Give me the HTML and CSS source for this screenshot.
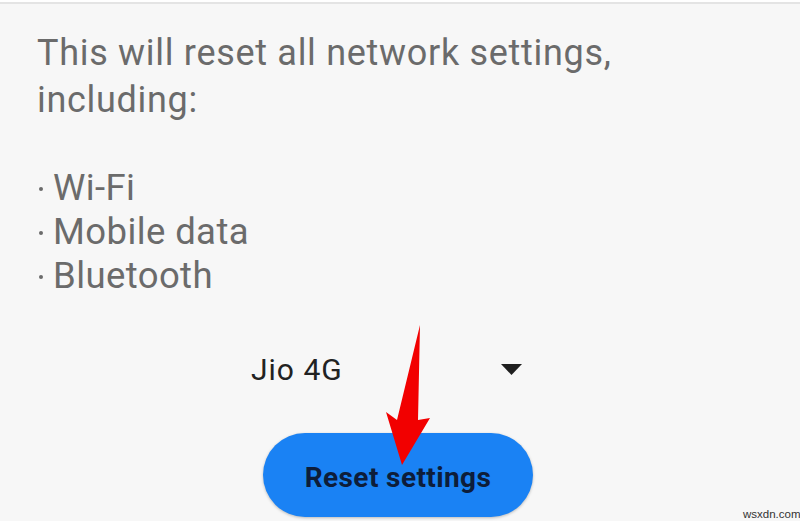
FILE: index.html
```html
<!DOCTYPE html>
<html>
<head>
<meta charset="utf-8">
<link rel="stylesheet" href="styles.css">
</head>
<body>
<div class="screen">
  <div class="content">
    <p class="intro">This will reset all network settings,<br>including:</p>
    <ul class="items">
      <li>Wi-Fi</li>
      <li>Mobile data</li>
      <li>Bluetooth</li>
    </ul>
  </div>
  <div class="select-row">
    <div class="select">
      <span class="select-label">Jio 4G</span>
      <svg class="caret" width="21" height="11" viewBox="0 0 21 11"><polygon points="0,0 21,0 10.5,11" fill="#1f1f1f"/></svg>
    </div>
  </div>
  <div class="button-row">
    <button class="reset-btn">Reset settings</button>
  </div>
  <svg class="arrow" width="800" height="521" viewBox="0 0 800 521">
    <polygon points="420,325 418,420 430,418 402,465 386,412 397,420" fill="#f20000"/>
  </svg>
  <div class="watermark">wsxdn.com</div>
</div>
</body>
</html>
```
FILE: styles.css
```css
html, body {
  margin: 0;
  padding: 0;
}
body {
  background: #f7f7f7;
  font-family: Roboto, "Noto Sans", sans-serif;
}
.screen {
  position: relative;
  width: 800px;
  height: 521px;
  overflow: hidden;
  border-top: 2px solid #ffffff;
  box-sizing: border-box;
}
.screen::before {
  content: "";
  display: block;
  height: 2px;
  background: #e4e4e4;
}
.content {
  padding-left: 37px;
  color: #6b6b6b;
}
.intro {
  margin: 0;
  padding-top: 26px;
  font-size: 36px;
  line-height: 47px;
  letter-spacing: 0.7px;
}
.items {
  list-style: none;
  margin: 0;
  padding: 42px 0 0 0;
  font-size: 36.5px;
  line-height: 44px;
  letter-spacing: 0.4px;
}
.items li {
  height: 44px;
}
.items li::before {
  content: "";
  display: inline-block;
  width: 4px;
  height: 4px;
  border-radius: 50%;
  background: #6b6b6b;
  margin-left: 2px;
  margin-right: 10px;
  vertical-align: 9px;
}
.select-row {
  display: flex;
  padding-top: 51px;
  padding-left: 251px;
}
.select {
  display: flex;
  align-items: center;
  width: 271px;
  justify-content: space-between;
  height: 40px;
}
.select-label {
  font-size: 30px;
  letter-spacing: 1px;
  color: #222222;
}
.caret {
  display: block;
}
.button-row {
  display: flex;
  padding-top: 44px;
  padding-left: 263px;
}
.reset-btn {
  width: 270px;
  height: 84px;
  border: none;
  border-radius: 42px;
  background: #1a82f4;
  box-shadow: 0 1px 3px rgba(0,0,0,0.25);
  font-family: Roboto, "Noto Sans", sans-serif;
  font-weight: 700;
  font-size: 28px;
  letter-spacing: 0.4px;
  color: #0d1d3a;
  padding: 5px 0 0 0;
}
.arrow {
  position: absolute;
  left: 0;
  top: -2px;
  pointer-events: none;
}
.watermark {
  position: absolute;
  left: 743px;
  top: 506px;
  font-family: "Liberation Sans", Arial, sans-serif;
  font-size: 11.5px;
  color: #333333;
}
```
